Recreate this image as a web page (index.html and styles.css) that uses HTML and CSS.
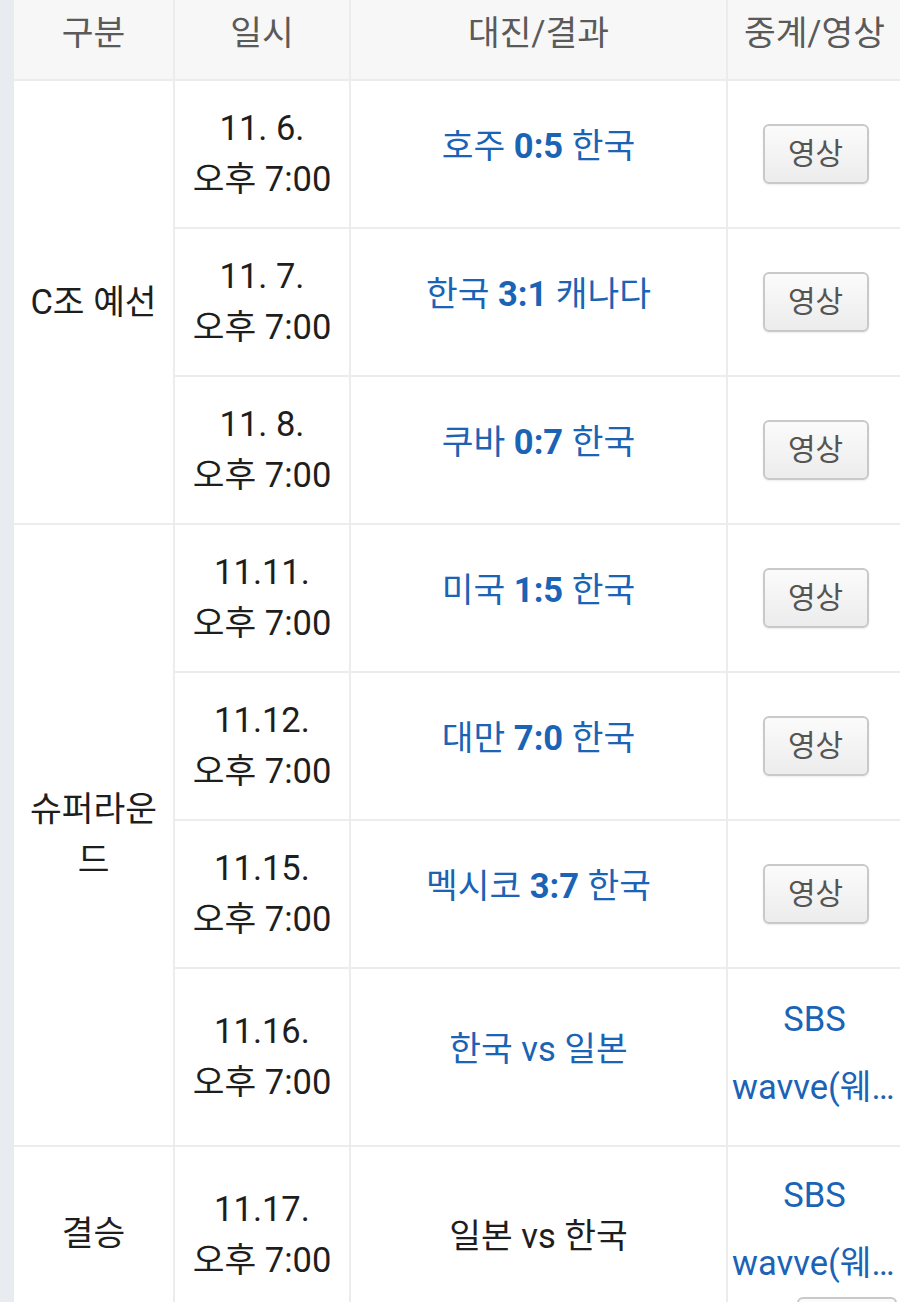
FILE: index.html
```html
<!DOCTYPE html>
<html lang="ko">
<head>
<meta charset="utf-8">
<title>일정</title>
<link rel="stylesheet" href="styles.css">
</head>
<body>
<div class="page">
  <table class="sched">
    <colgroup>
      <col class="c1"><col class="c2"><col class="c3"><col class="c4">
    </colgroup>
    <thead>
      <tr><th>구분</th><th>일시</th><th>대진/결과</th><th>중계/영상</th></tr>
    </thead>
    <tbody>
      <tr>
        <td class="stage" rowspan="3">C조 예선</td>
        <td class="date">11. 6.<br>오후 7:00</td>
        <td class="match"><a>호주 <b>0:5</b> 한국</a></td>
        <td class="media"><span class="btn">영상</span></td>
      </tr>
      <tr>
        <td class="date">11. 7.<br>오후 7:00</td>
        <td class="match"><a>한국 <b>3:1</b> 캐나다</a></td>
        <td class="media"><span class="btn">영상</span></td>
      </tr>
      <tr>
        <td class="date">11. 8.<br>오후 7:00</td>
        <td class="match"><a>쿠바 <b>0:7</b> 한국</a></td>
        <td class="media"><span class="btn">영상</span></td>
      </tr>
      <tr>
        <td class="stage" rowspan="4">슈퍼라운드</td>
        <td class="date">11.11.<br>오후 7:00</td>
        <td class="match"><a>미국 <b>1:5</b> 한국</a></td>
        <td class="media"><span class="btn">영상</span></td>
      </tr>
      <tr>
        <td class="date">11.12.<br>오후 7:00</td>
        <td class="match"><a>대만 <b>7:0</b> 한국</a></td>
        <td class="media"><span class="btn">영상</span></td>
      </tr>
      <tr>
        <td class="date">11.15.<br>오후 7:00</td>
        <td class="match"><a>멕시코 <b>3:7</b> 한국</a></td>
        <td class="media"><span class="btn">영상</span></td>
      </tr>
      <tr>
        <td class="date">11.16.<br>오후 7:00</td>
        <td class="match"><a>한국 vs 일본</a></td>
        <td class="media links"><a class="ch">SBS</a><a class="ch">wavve(웨이브)</a></td>
      </tr>
      <tr class="final">
        <td class="stage">결승</td>
        <td class="date">11.17.<br>오후 7:00</td>
        <td class="match"><span class="plain">일본 vs 한국</span></td>
        <td class="media links"><a class="ch">SBS</a><a class="ch">wavve(웨이브)</a><span class="btn btn-small">영상</span></td>
      </tr>
    </tbody>
  </table>
</div>
</body>
</html>
```

FILE: styles.css
```css
html, body {
  margin: 0;
  padding: 0;
  background: #e8ebef;
  overflow: hidden;
}
.page {
  padding-left: 14px;
  height: 1302px;
  overflow: hidden;
}
.sched {
  width: 888px;
  border-collapse: collapse;
  table-layout: fixed;
  background: #ffffff;
  font-family: Roboto, "Noto Sans CJK KR", sans-serif;
  font-size: 34.5px;
  line-height: 51px;
  color: #1e1e1e;
}
.c1 { width: 160px; }
.c2 { width: 176px; }
.c3 { width: 377px; }
.c4 { width: 175px; }
.sched th {
  background: #f7f7f7;
  color: #5a5a5a;
  font-weight: normal;
  height: 80px;
  padding: 0 0 20px;
  border: 2px solid #ececec;
  border-top: 0;
  border-left: 0;
  box-sizing: border-box;
  text-align: center;
  vertical-align: bottom;
  line-height: 51px;
}
.sched td {
  border: 2px solid #ececec;
  border-left: 0;
  text-align: center;
  vertical-align: middle;
  padding: 22px 6px;
}
.sched td.stage { padding: 22px 8px; }
.sched td.match { padding: 14px 6px 30px; }
.sched td.media { padding: 22px 4px; }
.sched td.links { padding: 16px 4px 24px; }
.match a {
  color: #1a63b5;
  text-decoration: none;
}
.match b { font-weight: bold; }
.plain { color: #1e1e1e; }
.ch {
  display: block;
  color: #1a63b5;
  text-decoration: none;
  line-height: 52px;
  padding: 8px 0;
  white-space: nowrap;
  overflow: hidden;
  text-overflow: ellipsis;
}
.btn {
  display: inline-block;
  box-sizing: border-box;
  width: 106px;
  height: 60px;
  line-height: 56px;
  border: 2px solid #c9c9c9;
  border-radius: 6px;
  background: linear-gradient(#fbfbfb, #ececec);
  color: #555555;
  font-size: 30px;
  box-shadow: 0 1px 2px rgba(0,0,0,0.08);
  margin-left: 2px;
}
.btn-small {
  display: block;
  width: 100px;
  margin-left: 65px;
}
.sched .final td { vertical-align: top; padding-top: 61px; }
.sched .final td.match { padding-top: 64px; }
.sched .final td.date { padding-top: 37px; }
.sched .final td.links { padding-top: 14px; }
```
